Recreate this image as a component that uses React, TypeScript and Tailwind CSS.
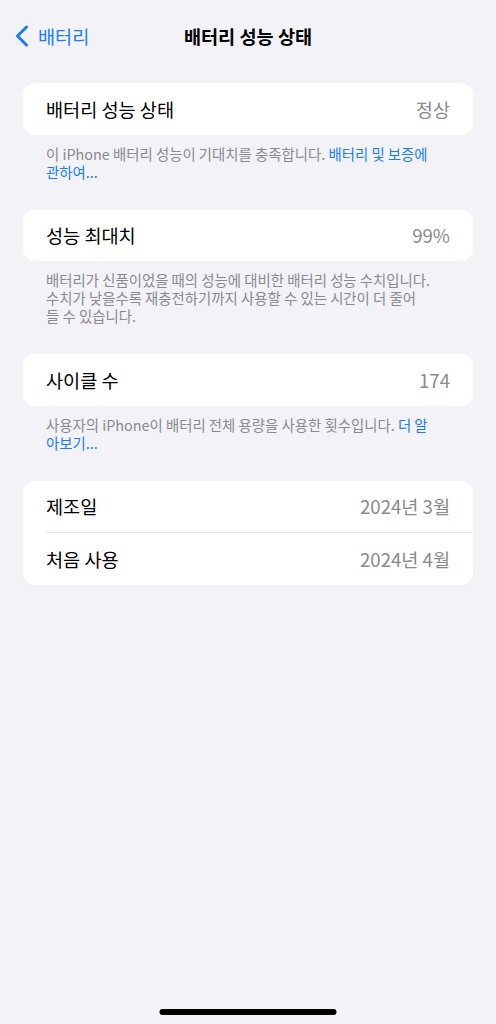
const font = { fontFamily: '"Noto Sans CJK KR", "Noto Sans", sans-serif' };

function Row({ label, value }: { label: string; value: string }) {
  return (
    <div className="flex h-[51.5px] items-center justify-between pr-[23px]">
      <span className="text-[18.6px] text-black">{label}</span>
      <span className="text-[18.6px] text-[#8a8a8e]">{value}</span>
    </div>
  );
}

function Footer({ children }: { children: React.ReactNode }) {
  return (
    <p className="pl-[23px] pr-[41px] pt-[10px] text-[14.4px] leading-[18px] text-[#8a8a8e]">{children}</p>
  );
}

export default function App() {
  return (
    <div className="relative flex min-h-[1024px] flex-col bg-[#f2f2f7]" style={font}>
      <header className="relative flex h-[72px] items-center px-[15px]">
        <button type="button" className="flex items-center gap-[9px] text-[#1a7cf5]">
          <svg width="14" height="22" viewBox="0 0 14 22" fill="none">
            <path d="M11.5 2 L2.5 11 L11.5 20" stroke="currentColor" strokeWidth="3" strokeLinecap="round" strokeLinejoin="round" />
          </svg>
          <span className="text-[18.6px] leading-none">배터리</span>
        </button>
        <h1 className="absolute left-1/2 -translate-x-1/2 text-[18.6px] font-bold text-black">배터리 성능 상태</h1>
      </header>

      <main className="flex flex-col px-[23px] pt-[11px]">
        <section className="rounded-[12px] bg-white pl-[23px]">
          <Row label="배터리 성능 상태" value="정상" />
        </section>
        <Footer>
          이 iPhone 배터리 성능이 기대치를 충족합니다. <span className="text-[#1a7cf5]">배터리 및 보증에 관하여...</span>
        </Footer>

        <section className="mt-[29px] rounded-[12px] bg-white pl-[23px]">
          <Row label="성능 최대치" value="99%" />
        </section>
        <Footer>
          배터리가 신품이었을 때의 성능에 대비한 배터리 성능 수치입니다. 수치가 낮을수록 재충전하기까지 사용할 수 있는 시간이 더 줄어 들 수 있습니다.
        </Footer>

        <section className="mt-[29px] rounded-[12px] bg-white pl-[23px]">
          <Row label="사이클 수" value="174" />
        </section>
        <Footer>
          사용자의 iPhone이 배터리 전체 용량을 사용한 횟수입니다. <span className="text-[#1a7cf5]">더 알아보기...</span>
        </Footer>

        <section className="mt-[29px] rounded-[12px] bg-white pl-[23px]">
          <Row label="제조일" value="2024년 3월" />
          <div className="h-px bg-[#e5e5ea]" />
          <Row label="처음 사용" value="2024년 4월" />
        </section>
      </main>

      <div className="absolute bottom-[9px] left-1/2 h-[6px] w-[177px] -translate-x-1/2 rounded-full bg-black" />
    </div>
  );
}
